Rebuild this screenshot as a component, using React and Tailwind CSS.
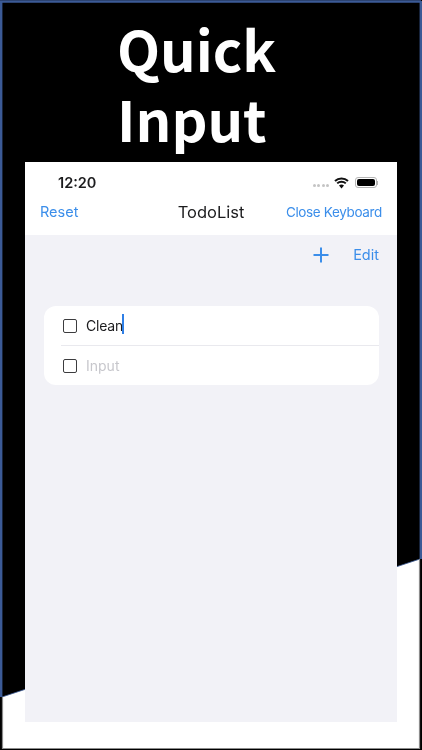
export default function App() {
  return (
    <div className="relative w-[422px] h-[750px] bg-black overflow-hidden blur-[0.4px]" style={{ fontFamily: '"Inter", "Liberation Sans", sans-serif' }}>
      {/* poster background: black/white diagonal and the frame lines */}
      <svg className="absolute inset-0" width="422" height="750" viewBox="0 0 422 750">
        <polygon points="2,697 420,559 420,748 2,748" fill="#ffffff" />
        <path d="M1.2 697 V1.5 H421 M420.8 1 V559" fill="none" stroke="#3b5a96" strokeWidth="2.4" />
        <path d="M2 697 L420 559" fill="none" stroke="#3b5a96" strokeWidth="0.8" />
        <path d="M2.5 697 V748.5 H419.5 V559" fill="none" stroke="#8c8c8c" strokeWidth="1.2" />
      </svg>

      <div className="relative flex flex-col pt-[13px]">
        <h1 className="h-[149px] pl-[117px] text-white text-[56px] leading-[70px] font-bold" style={{ fontFamily: '"Noto Sans CJK JP", "Noto Sans", sans-serif' }}>
          Quick<br />Input
        </h1>

        <div className="ml-[25px] w-[372px] h-[560px] flex flex-col bg-[#f2f2f7]">
          <div className="h-[73px] bg-white flex flex-col">
            <div className="h-[36px] pl-[33px] pr-[19px] pt-[5px] flex items-center justify-between">
              <span className="text-[14.5px] font-semibold text-[#1c1c1e]">12:20</span>
              <div className="flex items-center gap-[5px]">
                <div className="flex gap-[1.5px] mt-[5px]">
                  <span className="w-[3px] h-[3px] rounded-full bg-[#c4c4c4]" />
                  <span className="w-[3px] h-[3px] rounded-full bg-[#c4c4c4]" />
                  <span className="w-[3px] h-[3px] rounded-full bg-[#c4c4c4]" />
                  <span className="w-[3px] h-[3px] rounded-full bg-[#c4c4c4]" />
                </div>
                <svg width="15" height="12" viewBox="0 0 15 12">
                  <path d="M1 4a9.4 9.4 0 0 1 13 0M3.2 6.4a6.2 6.2 0 0 1 8.6 0" fill="none" stroke="#111" strokeWidth="2" />
                  <path d="M5 8.6a3.6 3.6 0 0 1 5 0L7.5 11.6z" fill="#111" />
                </svg>
                <div className="flex items-center ml-[1px]">
                  <div className="w-[22px] h-[11px] rounded-[3px] border border-[#b5b5b5] p-[1px]">
                    <div className="w-full h-full rounded-[2px] bg-black" />
                  </div>
                  <span className="w-[1px] h-[4px] bg-[#b5b5b5]" />
                </div>
              </div>
            </div>
            <div className="relative flex-1 pl-[15px] pr-[15px] pb-[9px] flex items-center justify-between text-[#3b8eea]">
              <span className="text-[14.5px]">Reset</span>
              <span className="text-[13.5px] tracking-[-0.35px]">Close Keyboard</span>
              <span className="absolute inset-x-0 text-center text-[16.5px] text-[#1c1c1e]">TodoList</span>
            </div>
          </div>

          <div className="h-[40px] flex items-center justify-end gap-[24px] pr-[18px] text-[#3b8eea]">
            <svg width="16" height="16" viewBox="0 0 16 16">
              <path d="M8 .5V15.5M.5 8H15.5" fill="none" stroke="#3b8eea" strokeWidth="2" />
            </svg>
            <span className="text-[14.5px]">Edit</span>
          </div>

          <div className="ml-[19px] mr-[18px] mt-[31px] bg-white rounded-[12px] flex flex-col">
            <div className="h-[39px] flex items-center pl-[19px] gap-[9px] text-[14px]">
              <span className="w-[14px] h-[14px] rounded-[2px] border-[1.5px] border-[#3c3c3e]" />
              <span className="relative text-[#1c1c1e] tracking-[-0.2px]">
                Clean
                <span className="absolute right-[-1px] top-[-1px] w-[2px] h-[20px] bg-[#2f7fe6]" />
              </span>
            </div>
            <div className="ml-[17px] h-[1px] bg-[#e9e9ee]" />
            <div className="h-[39px] flex items-center pl-[19px] gap-[9px] text-[14px]">
              <span className="w-[14px] h-[14px] rounded-[2px] border-[1.5px] border-[#3c3c3e]" />
              <span className="text-[#c7c7cc]">Input</span>
            </div>
          </div>
        </div>
      </div>
    </div>
  );
}
